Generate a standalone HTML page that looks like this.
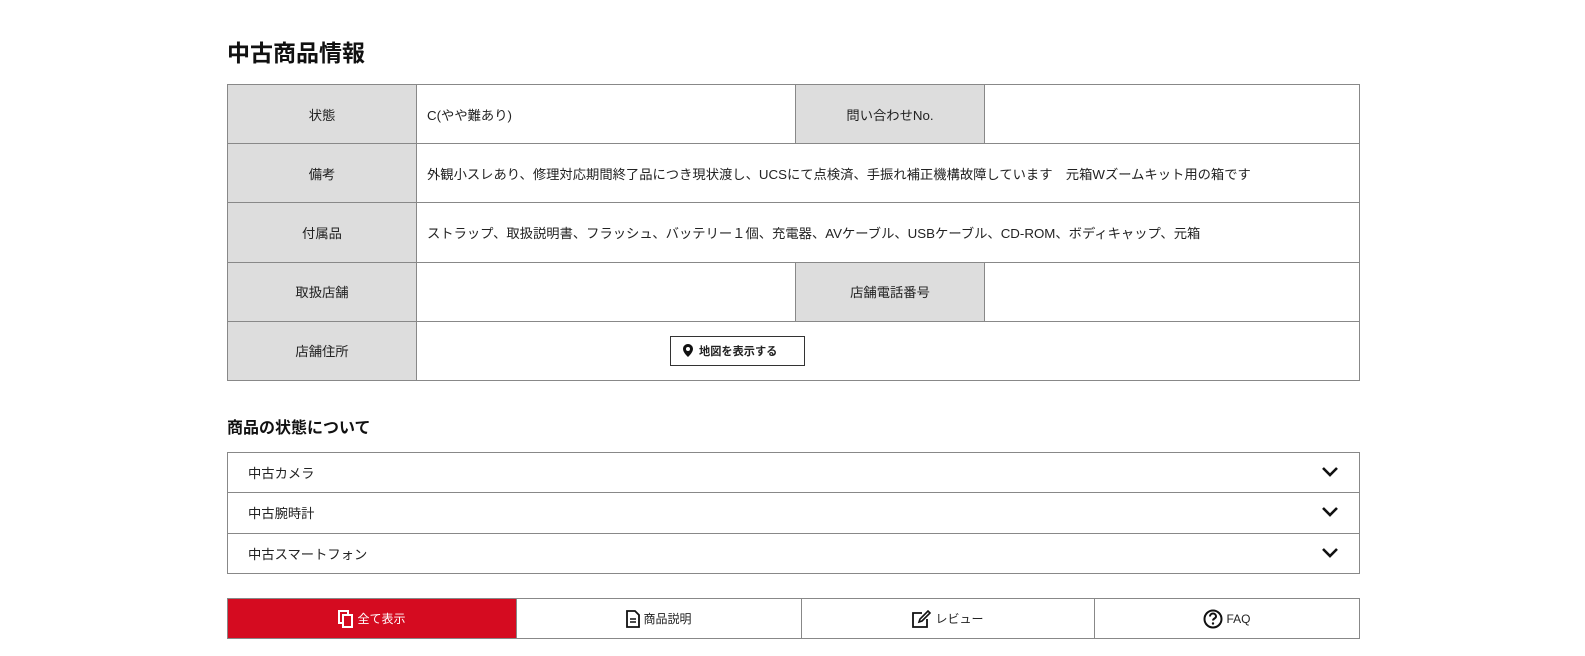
<!DOCTYPE html>
<html><head><meta charset="utf-8"><style>
*{box-sizing:border-box;margin:0;padding:0}
body{width:1585px;height:656px;background:#fff;font-family:"Liberation Sans","Noto Sans CJK JP",sans-serif;color:#222;font-size:13.3px;position:relative;overflow:hidden}
h1{position:absolute;left:227px;top:34px;font-size:23px;font-weight:bold;color:#111}
table{position:absolute;left:227px;top:84px;width:1133px;border-collapse:collapse;border:1px solid #888}
td{border:1px solid #888;height:59.2px;font-size:13.3px;vertical-align:middle}
td.l{background:#ddd;text-align:center;width:189px;border-left:none;border-right:none}
td.v{padding-left:10px}
.btn{display:inline-flex;align-items:center;border:1px solid #333;height:30px;width:135px;padding-left:12px;font-size:11.2px;font-weight:bold;margin-left:243px;gap:6px}
h2{position:absolute;left:227px;top:414px;font-size:16px;font-weight:bold;color:#111}
.acc{position:absolute;left:227px;top:452px;width:1133px;border:1px solid #888}
.acc div{height:40.3px;border-top:1px solid #888;display:flex;align-items:center;padding-left:20px;position:relative}
.acc div:first-child{border-top:none;height:39.3px}
.acc svg{position:absolute;right:20px;top:13px}
.tabs{position:absolute;left:227px;top:598px;width:1133px;height:41px;border:1px solid #888;display:flex}
.tabs div{display:flex;align-items:center;justify-content:center;gap:3px;font-size:12px;border-left:1px solid #888}
.tabs div:first-child{border-left:none;background:#d50b20;color:#fff}
</style></head><body>
<h1>中古商品情報</h1>
<table>
<tr><td class="l">状態</td><td class="v" style="width:379px">C(やや難あり)</td><td class="l" style="border-left:1px solid #888">問い合わせNo.</td><td></td></tr>
<tr><td class="l">備考</td><td class="v" colspan="3">外観小スレあり、修理対応期間終了品につき現状渡し、UCSにて点検済、手振れ補正機構故障しています　元箱Wズームキット用の箱です</td></tr>
<tr><td class="l">付属品</td><td class="v" colspan="3">ストラップ、取扱説明書、フラッシュ、バッテリー１個、充電器、AVケーブル、USBケーブル、CD-ROM、ボディキャップ、元箱</td></tr>
<tr><td class="l">取扱店舗</td><td class="v"></td><td class="l" style="border-left:1px solid #888">店舗電話番号</td><td></td></tr>
<tr><td class="l">店舗住所</td><td class="v" colspan="3"><span class="btn"><svg width="10" height="13" viewBox="0 0 10 13"><path d="M5 0C2.2 0 0 2.2 0 5c0 3.5 5 8 5 8s5-4.5 5-8C10 2.2 7.8 0 5 0zm0 7a2 2 0 110-4 2 2 0 010 4z" fill="#111"/></svg>地図を表示する</span></td></tr>
</table>
<h2>商品の状態について</h2>
<div class="acc">
<div>中古カメラ<svg width="18" height="12" viewBox="0 0 18 12"><path d="M2 2l7 7 7-7" stroke="#111" stroke-width="2.6" fill="none"/></svg></div>
<div>中古腕時計<svg width="18" height="12" viewBox="0 0 18 12"><path d="M2 2l7 7 7-7" stroke="#111" stroke-width="2.6" fill="none"/></svg></div>
<div>中古スマートフォン<svg width="18" height="12" viewBox="0 0 18 12"><path d="M2 2l7 7 7-7" stroke="#111" stroke-width="2.6" fill="none"/></svg></div>
</div>
<div class="tabs">
<div style="width:288px"><svg width="16" height="18" viewBox="0 0 16 18"><rect x="1" y="1" width="9" height="12" fill="none" stroke="#fff" stroke-width="2"/><rect x="5" y="5" width="9" height="12" fill="#d50b20" stroke="#fff" stroke-width="2"/></svg>全て表示</div>
<div style="width:285px"><svg width="14" height="18" viewBox="0 0 14 18"><path d="M1 1h8l4 4v12H1z" fill="none" stroke="#111" stroke-width="1.8"/><path d="M4 9h6M4 12h6" stroke="#111" stroke-width="1.5"/></svg>商品説明</div>
<div style="width:293px"><svg width="20" height="18" viewBox="0 0 20 18"><path d="M10 3H1v14h14V9" fill="none" stroke="#111" stroke-width="1.8"/><path d="M7 12l1-3 8-8 2 2-8 8z" fill="none" stroke="#111" stroke-width="1.6"/></svg>レビュー</div>
<div style="flex:1"><svg width="20" height="20" viewBox="0 0 20 20"><circle cx="10" cy="10" r="8.5" fill="none" stroke="#111" stroke-width="2"/><path d="M7 7.5a3 3 0 116 0c0 2-3 2-3 4" fill="none" stroke="#111" stroke-width="2"/><circle cx="10" cy="14.5" r="1.2" fill="#111"/></svg>FAQ</div>
</div>
</body></html>
